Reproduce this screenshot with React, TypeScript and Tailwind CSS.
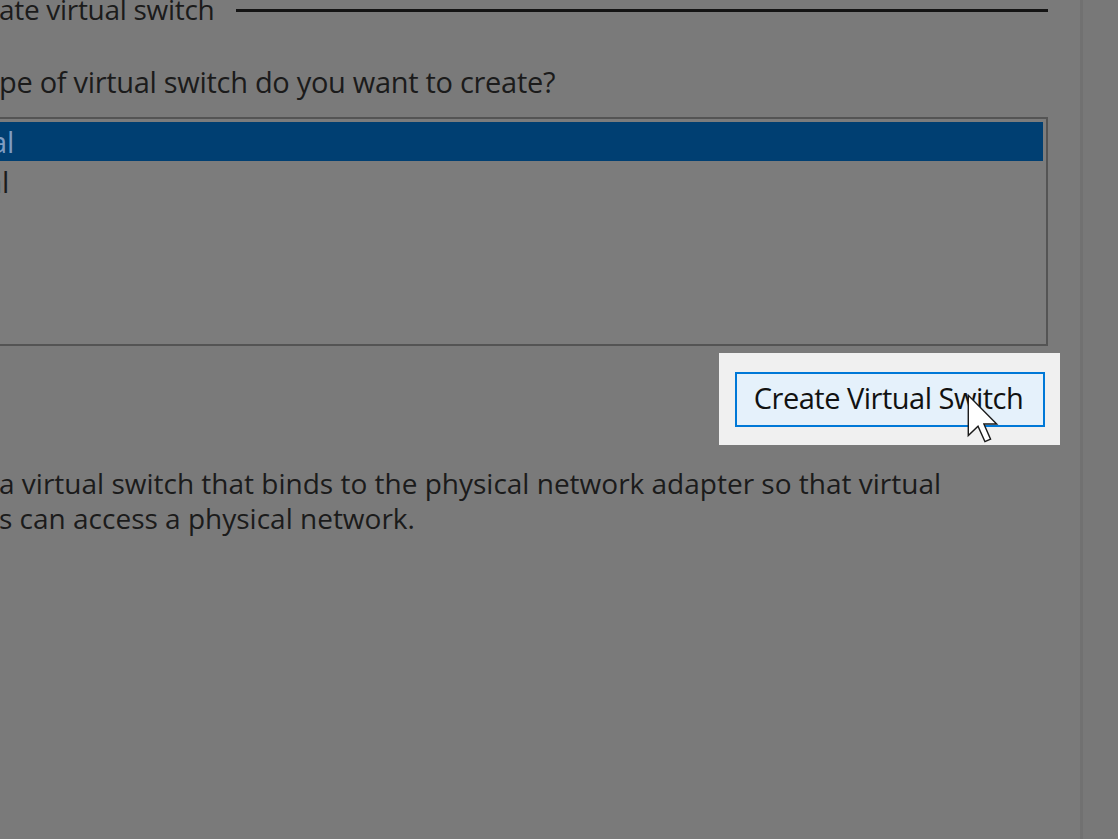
import React from 'react';

function Cursor() {
  // standard Windows arrow pointer, drawn on a 12x19 grid
  return (
    <svg width="32" height="50" viewBox="0 0 12.5 19.5" className="absolute left-[967px] top-[394px]">
      <path
        d="M0.5 0.5 L0.5 16.2 L4.3 12.6 L7 18.6 L9.2 17.6 L6.6 11.7 L11.6 11.7 Z"
        fill="#ffffff"
        stroke="#1a1a1a"
        strokeWidth="0.55"
        strokeLinejoin="miter"
      />
    </svg>
  );
}

export default function App() {
  const font = { fontFamily: '"Open Sans", "Noto Sans", sans-serif' };

  return (
    <div className="relative w-[1118px] h-[839px] overflow-hidden bg-[#7a7a7a] text-[#1b1b1b] flex" style={font}>
      {/* main dialog column */}
      <div className="w-[1080px] shrink-0 flex flex-col">
        {/* group header */}
        <div className="flex items-center h-[24px] -mt-[3px]">
          <span className="text-[28px] leading-none tracking-[-0.3px] whitespace-nowrap -ml-[1px]">ate virtual switch</span>
          <div className="flex-1 h-[3px] bg-[#141414] ml-[22px] mr-[32px] mt-[3px]" />
        </div>

        <div className="mt-[44px] text-[29px] leading-[34px] tracking-[-0.3px] whitespace-nowrap -ml-[1px]">
          pe of virtual switch do you want to create?
        </div>

        {/* list box */}
        <div className="mt-[18px] -ml-[10px] w-[1058px] h-[229px] border-2 border-[#545454] bg-[#7c7c7c] p-[3px] flex flex-col">
          <div className="h-[39px] bg-[#003f72] flex items-center">
            <span className="text-[29px] leading-none text-[#7f9dc2] -ml-[4px]">al</span>
          </div>
          <div className="h-[40px] flex items-center">
            <span className="text-[29px] leading-none -ml-[9px]">al</span>
          </div>
        </div>

        {/* highlighted action button */}
        <div className="flex justify-end mt-[7px] mr-[20px]">
          <div className="w-[341px] h-[92px] bg-[#f0f0f0] flex items-center justify-center">
            <button className="w-[310px] h-[55px] border-2 border-[#0078d7] bg-[#e5f1fb] text-[29px] tracking-[-0.5px] text-[#111] flex items-center justify-center pb-[2px] pr-[2px]">
              Create Virtual Switch
            </button>
          </div>
        </div>

        <div className="mt-[21px] text-[28px] leading-[35px] whitespace-nowrap -ml-[1px]">
          <div>a virtual switch that binds to the physical network adapter so that virtual</div>
          <div>s can access a physical network.</div>
        </div>
      </div>

      {/* right edge of the panel */}
      <div className="w-[3px] shrink-0 bg-[#717171]" />
      <div className="flex-1 bg-[#787878]" />

      <Cursor />
    </div>
  );
}
